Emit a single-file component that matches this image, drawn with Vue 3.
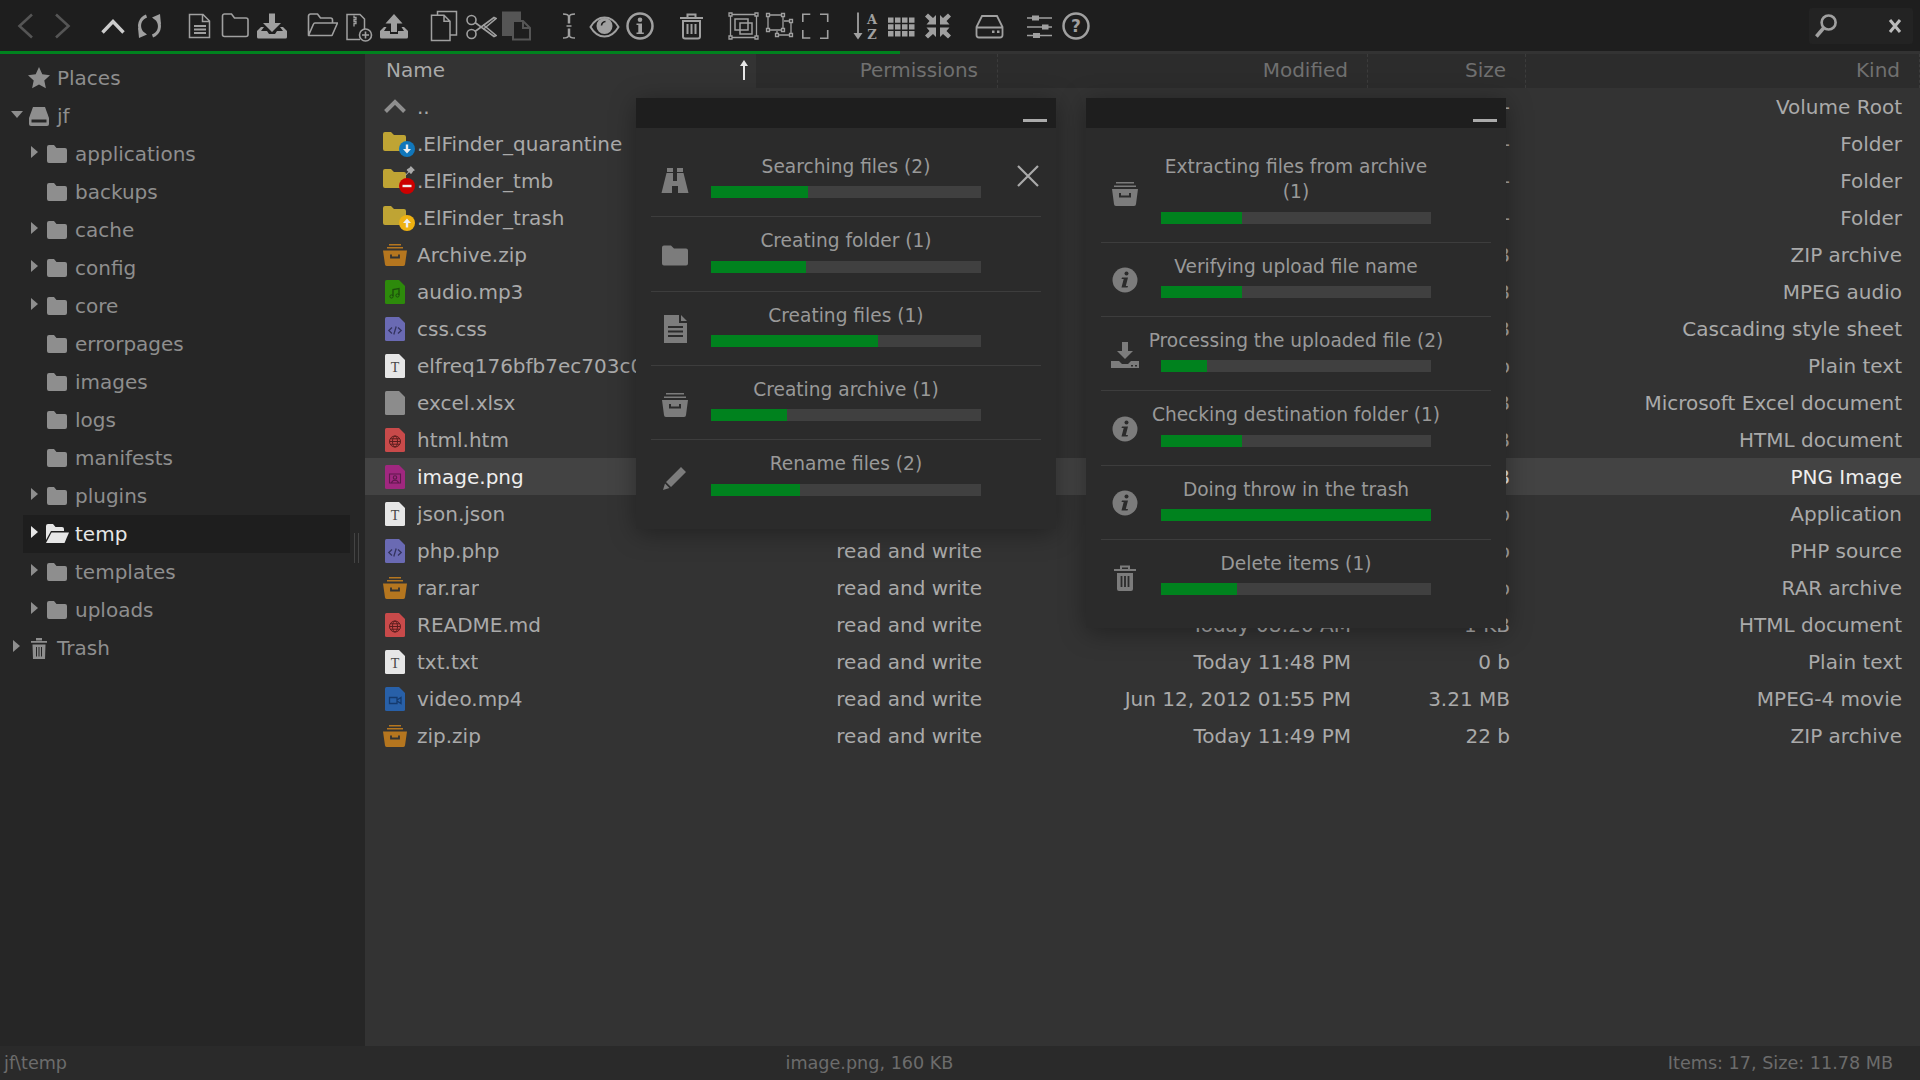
<template>
  <div class="finder">
    <svg class="defs" width="0" height="0" aria-hidden="true">
      <!-- toolbar, 32 box -->
      <symbol id="t-back" viewBox="0 0 32 32"><path d="M22 4.500 9.500 16 22 27.500" fill="none" stroke="#555" stroke-width="2.600"/></symbol>
      <symbol id="t-forward" viewBox="0 0 32 32"><path d="M10 4.500 22.500 16 10 27.500" fill="none" stroke="#555" stroke-width="2.600"/></symbol>
      <symbol id="t-up" viewBox="0 0 32 32"><path d="M5.500 22.500 16 11.500l10.500 11" fill="none" stroke="#ccc" stroke-width="3.400"/></symbol>
      <symbol id="t-reload" viewBox="0 0 32 32"><g fill="none" stroke="#a0a0a0" stroke-width="3"><path d="M13.500 6C7 8.500 4.500 15.500 8.500 22"/><path d="M19.500 26C26 23.500 28.500 16.500 24.500 10"/></g><path d="M5 17.500l9 7-8 3.500zM28 14.500l-9-7 8-3.500z" fill="#a0a0a0"/></symbol>
      <symbol id="t-file" viewBox="0 0 32 32"><path d="M6.500 4.500h13.500l6.500 6.500v16.500h-20zM19.500 4.500v7h7" fill="none" stroke="#a0a0a0" stroke-width="1.500"/><path d="M11 16h12M11 19.500h12M11 23h12" stroke="#a0a0a0" stroke-width="1.800"/></symbol>
      <symbol id="t-folder" viewBox="0 0 32 32"><path d="M3.500 6a2 2 0 0 1 2-2h7l3 4h11.500a2 2 0 0 1 2 2v14.500a2 2 0 0 1-2 2H5.500a2 2 0 0 1-2-2z" fill="none" stroke="#a0a0a0" stroke-width="1.600"/></symbol>
      <symbol id="t-download" viewBox="0 0 32 32"><path d="M14 3.500h6V13h6l-9 9-9-9h6z" fill="#a0a0a0"/><path d="M2 27v-6l4-4h3l-3 4h6l2 3h6l2-3h6l-3-4h3l4 4v6a1.500 1.500 0 0 1-1.500 1.500h-27A1.500 1.500 0 0 1 2 27z" fill="#a0a0a0"/></symbol>
      <symbol id="t-open" viewBox="0 0 32 32"><path d="M2.500 25V6a2 2 0 0 1 2-2h7l3 4h10a2 2 0 0 1 2 2v3M2.500 25.500l5-11.500a1.500 1.500 0 0 1 1.500-1h22.500l-5.500 12.500z" fill="none" stroke="#a0a0a0" stroke-width="1.600" stroke-linejoin="round"/></symbol>
      <symbol id="t-zip" viewBox="0 0 32 32"><path d="M18 29.500H5V4.500h13l4.500 4.500v10" fill="none" stroke="#a0a0a0" stroke-width="1.500"/><path d="M12 5.500v2h2v2h-2v2h2v2h-2v3" fill="none" stroke="#a0a0a0" stroke-width="1.300"/><circle cx="23.500" cy="25" r="6" fill="#1e1e1e" stroke="#a0a0a0" stroke-width="1.600"/><path d="M23.500 21.500v7M20 25h7" stroke="#a0a0a0" stroke-width="1.600"/></symbol>
      <symbol id="t-upload" viewBox="0 0 32 32"><path d="M16 4l8.500 9.500H19V22h-6v-8.500H7.500z" fill="#a0a0a0"/><path d="M2 27v-6l4-4h2.500L6 21h6v3h8v-3h6l-2.500-4H26l4 4v6a1.500 1.500 0 0 1-1.500 1.500h-25A1.500 1.500 0 0 1 2 27z" fill="#a0a0a0"/></symbol>
      <symbol id="t-copy" viewBox="0 0 32 32"><path d="M8.500 5V1.500h19V25H21M2.500 5.200H15l6 6v19.300H2.500zM15 5.200v6h6" fill="none" stroke="#a0a0a0" stroke-width="1.500"/></symbol>
      <symbol id="t-cut" viewBox="0 0 32 32"><g fill="none" stroke="#a0a0a0" stroke-width="1.600"><circle cx="6.500" cy="10" r="4.500"/><circle cx="6.500" cy="24" r="4.500"/><path d="M10 21.500 29 7.500l2 1L18 19.500M10 12.500l19 14 2-1L18 14.500"/></g></symbol>
      <symbol id="t-paste" viewBox="0 0 32 32"><path d="M1 1.500h19V10h-9v16H1z" fill="#555"/><path d="M12 11h10l7 7v11.500H12zM22 11v7h7" fill="none" stroke="#555" stroke-width="2"/></symbol>
      <symbol id="t-rename" viewBox="0 0 32 32"><path d="M11 4c3.500 0 5.500 .500 5.500 2.500v7M23 4c-3.500 0-5.500 .500-5.500 2.500v7M11 28c3.500 0 5.500-.500 5.500-2.500v-7M23 28c-3.500 0-5.500-.500-5.500-2.500v-7M14.500 16h5" fill="none" stroke="#a0a0a0" stroke-width="1.500"/></symbol>
      <symbol id="t-eye" viewBox="0 0 32 32"><path d="M2.500 17C6 11 11 7.500 16.500 7.500S27 11 30.500 17C27 23 22 26.500 16.500 26.500S6 23 2.500 17z" fill="none" stroke="#a0a0a0" stroke-width="2"/><circle cx="16.500" cy="16" r="8" fill="#a0a0a0"/><path d="M13.500 15.500a4.500 4.500 0 0 1 4-4" stroke="#1e1e1e" stroke-width="1.600" fill="none"/></symbol>
      <symbol id="t-info" viewBox="0 0 32 32"><circle cx="16" cy="16" r="12.500" fill="none" stroke="#a0a0a0" stroke-width="2.500"/><circle cx="16" cy="9.800" r="2.300" fill="#a0a0a0"/><path d="M12.500 13.500H18v9h1.800v1.500h-7.300v-1.500h1.800v-7.500h-1.800z" fill="#a0a0a0"/></symbol>
      <symbol id="t-trash" viewBox="0 0 32 32"><path d="M5 8h23M12.500 8V4.500h8V8" fill="none" stroke="#a0a0a0" stroke-width="2"/><path d="M8 11h17v15.500a2 2 0 0 1-2 2H10a2 2 0 0 1-2-2z" fill="none" stroke="#a0a0a0" stroke-width="2"/><path d="M12.500 14v10M16.500 14v10M20.500 14v10" stroke="#a0a0a0" stroke-width="2"/></symbol>
      <symbol id="t-selall" viewBox="0 0 32 32"><path d="M3.500 4.500h26v23h-26z" fill="none" stroke="#a0a0a0" stroke-width="1.300"/><path d="M8 9h13v11H8zM13 13h12v11H13z" fill="none" stroke="#a0a0a0" stroke-width="1.500"/><path d="M2 3h3v3H2zM28 3h3v3h-3zM2 26h3v3H2zM28 26h3v3h-3z" fill="#1e1e1e" stroke="#a0a0a0" stroke-width="1.300"/></symbol>
      <symbol id="t-selinv" viewBox="0 0 32 32"><path d="M5 5h15v15H5zM21 11h7v14H14v-4" fill="none" stroke="#a0a0a0" stroke-width="1.300"/><path d="M3.500 3.500h3v3h-3zM18.500 3.500h3v3h-3zM3.500 18.500h3v3h-3zM18.500 18.500h3v3h-3zM26.500 9.500h3v3h-3zM26.500 23.500h3v3h-3zM12.500 23.500h3v3h-3z" fill="#1e1e1e" stroke="#a0a0a0" stroke-width="1.300"/></symbol>
      <symbol id="t-selnone" viewBox="0 0 32 32"><path d="M3.800 12V4.300h7.500M21 4.300h7.700V12M3.800 20v8h7.500M21 28.300h7.700V20" fill="none" stroke="#a0a0a0" stroke-width="1.600"/></symbol>
      <symbol id="t-sort" viewBox="0 0 32 32"><path d="M8 2.500v22" stroke="#a0a0a0" stroke-width="1.800"/><path d="M3.500 23h9L8 29.500z" fill="#a0a0a0"/></symbol>
      <symbol id="t-grid" viewBox="0 0 32 32"><path d="M2 7.500h5.500v5.300H2zM9 7.500h5.500v5.300H9zM16 7.500h5.500v5.300H16zM23 7.500h5.500v5.300H23zM2 14.300h5.500v5.300H2zM9 14.300h5.500v5.300H9zM16 14.300h5.500v5.300H16zM23 14.300h5.500v5.300H23zM2 21.100h5.500v5.300H2zM9 21.100h5.500v5.300H9zM16 21.100h5.500v5.300H16zM23 21.100h5.500v5.300H23z" fill="#a0a0a0"/></symbol>
      <symbol id="t-compress" viewBox="0 0 32 32"><path d="M14 14.500V5l-3 3-5-4.500-3 3L7.500 11l-3 3.500zM18 14.500V5l3 3 5-4.500 3 3-4.500 4.500 3 3.500zM14 17.500V27l-3-3-5 4.500-3-3 4.500-4.500-3-3.500zM18 17.500V27l3-3 5 4.500 3-3-4.500-4.500 3-3.500z" fill="#a0a0a0"/></symbol>
      <symbol id="t-drive" viewBox="0 0 32 32"><path d="M9 6h15l5.500 11v8a2.500 2.500 0 0 1-2.500 2.500H6A2.500 2.500 0 0 1 3.500 25v-8zM3.500 17.500h26" fill="none" stroke="#a0a0a0" stroke-width="1.800"/><path d="M19 20.500h2.500V23H19zM24 20.500h2.500V23H24z" fill="#a0a0a0"/></symbol>
      <symbol id="t-prefs" viewBox="0 0 32 32"><path d="M3 8h25M3 17h25M3 25.500h25" stroke="#a0a0a0" stroke-width="1.500"/><path d="M8 5.500h7v5H8zM18 14.500h6.500v5H18zM9 23h7v5H9z" fill="#a0a0a0"/></symbol>
      <symbol id="t-help" viewBox="0 0 32 32"><circle cx="16" cy="16" r="12.500" fill="none" stroke="#a0a0a0" stroke-width="2.500"/></symbol>
      <symbol id="t-search" viewBox="0 0 32 32"><circle cx="19" cy="12" r="8" fill="none" stroke="#a0a0a0" stroke-width="3"/><path d="M13.500 18 5 28" stroke="#a0a0a0" stroke-width="4"/></symbol>

      <!-- dialog and tree, solid -->
      <symbol id="d-binoculars" viewBox="0 0 28 28"><path d="M6 1h6v4H6zM16 1h6v4h-6z" fill="#7c7c7c"/><path d="M5.500 6H12v8h4V6h6.500l5 20H17v-7h-6v7H.500z" fill="#7c7c7c"/></symbol>
      <symbol id="d-folder" viewBox="0 0 28 28"><path d="M1 6.500A2 2 0 0 1 3 4.500h7l3 3h12a2 2 0 0 1 2 2v13a2 2 0 0 1-2 2H3a2 2 0 0 1-2-2z" fill="#7c7c7c"/></symbol>
      <symbol id="d-doc" viewBox="0 0 28 28"><path d="M3 0h15v8h8v20H3zM20 0l6 6h-6z" fill="#7c7c7c"/><path d="M7 12h15M7 16.500h15M7 21h15" stroke="#2b2b2b" stroke-width="2"/></symbol>
      <symbol id="d-archive" viewBox="0 0 28 28"><path d="M5 3h18v1.500H5zM3 6.500h22V8H3z" fill="#7c7c7c"/><path d="M1 10h26l-2 15a2 2 0 0 1-2 2H5a2 2 0 0 1-2-2z" fill="#7c7c7c"/><path d="M9 14v3.500h10V14" fill="none" stroke="#2b2b2b" stroke-width="2"/></symbol>
      <symbol id="d-pencil" viewBox="0 0 28 28"><path d="M20 3l5 5L10 23l-5-5zM4 19.500l4.500 4.500-6.500 2z" fill="#7c7c7c"/></symbol>
      <symbol id="d-info" viewBox="0 0 28 28"><circle cx="14" cy="14" r="12.500" fill="#7c7c7c"/><circle cx="15.500" cy="7.500" r="2" fill="#2b2b2b"/><path d="M11 11.500h6l-2.200 8.500H17l-.500 1.500h-6l2.200-8.500H10.500z" fill="#2b2b2b"/></symbol>
      <symbol id="d-upload" viewBox="0 0 28 28"><path d="M11 1h6v9h5l-8 8-8-8h5z" fill="#7c7c7c"/><path d="M0 20h8l3 3h6l3-3h8v7H0z" fill="#7c7c7c"/><path d="M20 24h2v1.500h-2zM24 24h2v1.500h-2z" fill="#2b2b2b"/></symbol>
      <symbol id="d-trash" viewBox="0 0 28 28"><path d="M3 6h22M10 6V2.500h8V6" fill="none" stroke="#7c7c7c" stroke-width="2"/><path d="M6 9h16v16a2 2 0 0 1-2 2H8a2 2 0 0 1-2-2z" fill="#7c7c7c"/><path d="M10.500 12v11M14 12v11M17.500 12v11" stroke="#2b2b2b" stroke-width="1.800"/></symbol>

      <symbol id="s-star" viewBox="0 0 24 24"><path d="M12 1l3.300 7.300 7.700.900-5.700 5.300 1.600 7.800L12 18.400l-6.900 3.900 1.600-7.800L1 9.200l7.700-.900z" fill="#8e8e8e"/></symbol>
      <symbol id="s-drive" viewBox="0 0 24 24"><path d="M6 3h12l4 11v6a2 2 0 0 1-2 2H4a2 2 0 0 1-2-2v-6z" fill="#8e8e8e"/><path d="M4.500 15.500h15v3h-15z" fill="#262626"/></symbol>
      <symbol id="s-folder" viewBox="0 0 24 24"><path d="M2 5a2 2 0 0 1 2-2h5l2.500 3H20a2 2 0 0 1 2 2v11a2 2 0 0 1-2 2H4a2 2 0 0 1-2-2z" fill="#8e8e8e"/></symbol>
      <symbol id="s-open" viewBox="0 0 24 24"><path d="M1 18V4a2 2 0 0 1 2-2h5l2.500 3H17a2 2 0 0 1 2 2v2H6z" fill="#e6e6e6"/><path d="M6.500 10.500H24L19.500 21H1z" fill="#e6e6e6"/></symbol>
      <symbol id="s-trash" viewBox="0 0 24 24"><path d="M4 5h16v1.800H4zM9 2h6v2.500H9z" fill="#8e8e8e"/><path d="M5.500 8.500h13L18 23H6z" fill="#8e8e8e"/><path d="M9.500 11v9.500M12 11v9.500M14.500 11v9.500" stroke="#262626" stroke-width="1"/></symbol>

      <!-- file list -->
      <path id="f-base" d="M3.500 0H16l6 6v16.500a1.500 1.500 0 0 1-1.500 1.500h-17A1.500 1.500 0 0 1 2 22.500v-21A1.500 1.500 0 0 1 3.500 0z"/>
      <symbol id="f-up" viewBox="0 0 24 24"><path d="M2.500 16.500 12 7l9.500 9.500" fill="none" stroke="#8e8e8e" stroke-width="4"/></symbol>
      <symbol id="f-folder" viewBox="0 0 24 24"><path d="M0 2a2 2 0 0 1 2-2h6l3 3h10a2 2 0 0 1 2 2v14H2a2 2 0 0 1-2-2z" fill="#bfa434"/></symbol>
      <symbol id="f-archive" viewBox="0 0 24 24"><path d="M6 1h12v1.500H6zM4 4h16v1.500H4z" fill="#b5761f"/><path d="M0 7.500h24l-2 14a2 2 0 0 1-2 1.500H4a2 2 0 0 1-2-1.500z" fill="#b5761f"/><path d="M8 11.500v3h8v-3" fill="none" stroke="#333" stroke-width="1.800"/></symbol>
      <symbol id="f-audio" viewBox="0 0 24 24"><use href="#f-base" fill="#2d8a0b"/><path d="M10 16V9.500l6-1V15" fill="none" stroke="#1c4d0c" stroke-width="1.300"/><circle cx="8.500" cy="16.500" r="1.600" fill="none" stroke="#1c4d0c"/><circle cx="14.500" cy="15.500" r="1.600" fill="none" stroke="#1c4d0c"/></symbol>
      <symbol id="f-code" viewBox="0 0 24 24"><use href="#f-base" fill="#6a6ab3"/><path d="M9 10.500 5.800 13.500 9 16.500M15 10.500l3.200 3L15 16.500M13.200 9.500l-2.400 8" fill="none" stroke="#34345f" stroke-width="1.300"/></symbol>
      <symbol id="f-text" viewBox="0 0 24 24"><use href="#f-base" fill="#e6e6e6"/></symbol>
      <symbol id="f-blank" viewBox="0 0 24 24"><use href="#f-base" fill="#8c8c8c"/></symbol>
      <symbol id="f-html" viewBox="0 0 24 24"><use href="#f-base" fill="#c84a4a"/><g fill="none" stroke="#5a1d1d" stroke-width="1"><circle cx="12" cy="13.500" r="5.500"/><ellipse cx="12" cy="13.500" rx="2.500" ry="5.500"/><path d="M6.500 13.500h11M7.300 10.800h9.400M7.300 16.200h9.400"/></g></symbol>
      <symbol id="f-image" viewBox="0 0 24 24"><use href="#f-base" fill="#a0277f"/><g fill="none" stroke="#5e184c" stroke-width="1.100"><path d="M6.500 9h11v9h-11z"/><circle cx="12" cy="12.500" r="1.700"/><path d="M8.500 18c.500-2 2-2.700 3.500-2.700s3 .700 3.500 2.700"/></g></symbol>
      <symbol id="f-video" viewBox="0 0 24 24"><use href="#f-base" fill="#2860a8"/><path d="M6.500 10.500h7.500v6H6.500zM14 13l4-2.500v6L14 14" fill="none" stroke="#143a6e" stroke-width="1.300"/></symbol>
    </svg>

    <header class="toolbar">
      <div v-for="(group, i) in toolbar" :key="i" class="tool-group">
        <button v-for="name in group" :key="name" class="tool" type="button">
          <svg class="tool-icon" viewBox="0 0 32 32">
            <use :href="'#t-' + name" width="32" height="32" />
            <template v-if="name === 'sort'">
              <text x="22" y="13.500" class="sort-letter">A</text>
              <text x="22" y="28.500" class="sort-letter">Z</text>
            </template>
            <text v-if="name === 'help'" x="16" y="22" class="help-mark">?</text>
          </svg>
        </button>
      </div>
      <div class="search">
        <svg class="search-icon"><use href="#t-search" /></svg>
        <svg class="search-clear" viewBox="0 0 14 14"><path d="M2 1l10 12M12 1 2 13" stroke="#bbb" stroke-width="3" fill="none" /></svg>
      </div>
    </header>
    <div class="progress-line"></div>

    <div class="workspace">
      <aside class="tree">
        <div
          v-for="node in tree"
          :key="node.name"
          class="tree-row"
          :class="['level-' + node.level, { current: node.current }]"
        >
          <span class="arrow" :class="node.arrow"></span>
          <svg class="tree-icon"><use :href="'#s-' + node.icon" /></svg>
          <span class="tree-label">{{ node.name }}</span>
        </div>
        <div class="resizer"></div>
      </aside>

      <main class="files">
        <div class="file-head">
          <div class="head-cell name-head">
            Name
            <svg class="sort-arrow" viewBox="0 0 10 20"><path d="M5 0l4 6H6v14H4V6H1z" fill="#e6e6e6" /></svg>
          </div>
          <div class="head-cell">Permissions</div>
          <div class="head-cell">Modified</div>
          <div class="head-cell">Size</div>
          <div class="head-cell">Kind</div>
        </div>
        <div v-for="row in files" :key="row.name" class="file-row" :class="{ selected: row.selected }">
          <div class="file-name">
            <span class="file-icon-box">
              <svg class="file-icon" viewBox="0 0 24 24">
                <use :href="'#f-' + row.icon" width="24" height="24" />
                <text v-if="row.icon === 'text'" x="12" y="18" class="text-mark">T</text>
              </svg>
              <svg v-if="row.badge" class="badge" viewBox="0 0 16 16">
                <circle cx="8" cy="8" r="8" :fill="badgeColors[row.badge]" />
                <path v-if="row.badge === 'blue'" d="M6.800 3.500h2.400v4.500H12L8 12.500 4 8h2.800z" fill="#eee" />
                <path v-if="row.badge === 'red'" d="M3.500 6.800h9v2.400h-9z" fill="#eee" />
                <path v-if="row.badge === 'yellow'" d="M6.800 12.500h2.400V8H12L8 3.500 4 8h2.800z" fill="#eee" />
              </svg>
              <svg v-if="row.pin" class="pin" viewBox="0 0 12 12"><path d="M7 0l5 5-2 1-2 3-1 .500L5 7.500 1 11.500 0 11l4-4-2-2 .500-1 3-2z" fill="#aaa" /></svg>
            </span>
            <span class="file-label">{{ row.name }}</span>
          </div>
          <div class="cell">{{ row.perms }}</div>
          <div class="cell">{{ row.modified }}</div>
          <div class="cell">{{ row.size }}</div>
          <div class="cell">{{ row.kind }}</div>
        </div>
      </main>
    </div>

    <footer class="status">
      <span class="status-left">jf\temp</span>
      <span class="status-mid">image.png, 160 KB</span>
      <span class="status-right">Items: 17, Size: 11.78 MB</span>
    </footer>

    <section v-for="dlg in dialogs" :key="dlg.id" class="dialog" :class="dlg.id">
      <div class="dialog-head"><span class="minimize"></span></div>
      <div class="dialog-body">
        <div v-for="job in dlg.jobs" :key="job.text" class="job">
          <svg class="job-icon"><use :href="'#d-' + job.icon" /></svg>
          <div class="job-main">
            <div class="job-text" :class="{ narrow: job.narrow }">{{ job.text }}</div>
            <div class="bar"><div class="bar-fill" :style="{ width: job.pct + '%' }"></div></div>
          </div>
        </div>
        <svg v-if="dlg.id === 'dlg-a'" class="job-cancel" viewBox="0 0 24 24"><path d="M2 2l20 20M22 2 2 22" stroke="#aaa" stroke-width="2.200" fill="none" /></svg>
      </div>
    </section>
  </div>
</template>

<script setup>
const toolbar = [
  ['back', 'forward'],
  ['up', 'reload'],
  ['file', 'folder', 'download'],
  ['open', 'zip', 'upload'],
  ['copy', 'cut', 'paste'],
  ['rename', 'eye', 'info'],
  ['trash'],
  ['selall', 'selinv', 'selnone'],
  ['sort', 'grid', 'compress'],
  ['drive'],
  ['prefs', 'help'],
]

const badgeColors = { blue: '#1177bb', red: '#cc0000', yellow: '#eeb111' }

const tree = [
  { name: 'Places', level: 0, arrow: '', icon: 'star' },
  { name: 'jf', level: 0, arrow: 'open', icon: 'drive' },
  { name: 'applications', level: 1, arrow: 'closed', icon: 'folder' },
  { name: 'backups', level: 1, arrow: '', icon: 'folder' },
  { name: 'cache', level: 1, arrow: 'closed', icon: 'folder' },
  { name: 'config', level: 1, arrow: 'closed', icon: 'folder' },
  { name: 'core', level: 1, arrow: 'closed', icon: 'folder' },
  { name: 'errorpages', level: 1, arrow: '', icon: 'folder' },
  { name: 'images', level: 1, arrow: '', icon: 'folder' },
  { name: 'logs', level: 1, arrow: '', icon: 'folder' },
  { name: 'manifests', level: 1, arrow: '', icon: 'folder' },
  { name: 'plugins', level: 1, arrow: 'closed', icon: 'folder' },
  { name: 'temp', level: 1, arrow: 'closed', icon: 'open', current: true },
  { name: 'templates', level: 1, arrow: 'closed', icon: 'folder' },
  { name: 'uploads', level: 1, arrow: 'closed', icon: 'folder' },
  { name: 'Trash', level: 0, arrow: 'closed', icon: 'trash' },
]

const rw = 'read and write'
const files = [
  { name: '..', icon: 'up', perms: rw, modified: 'Today 11:49 PM', size: '-', kind: 'Volume Root' },
  { name: '.ElFinder_quarantine', icon: 'folder', badge: 'blue', perms: rw, modified: 'Today 11:49 PM', size: '-', kind: 'Folder' },
  { name: '.ElFinder_tmb', icon: 'folder', badge: 'red', pin: true, perms: rw, modified: 'Today 11:49 PM', size: '-', kind: 'Folder' },
  { name: '.ElFinder_trash', icon: 'folder', badge: 'yellow', perms: rw, modified: 'Today 11:49 PM', size: '-', kind: 'Folder' },
  { name: 'Archive.zip', icon: 'archive', perms: rw, modified: 'Today 11:49 PM', size: '2 KB', kind: 'ZIP archive' },
  { name: 'audio.mp3', icon: 'audio', perms: rw, modified: 'Today 11:49 PM', size: '2 MB', kind: 'MPEG audio' },
  { name: 'css.css', icon: 'code', perms: rw, modified: 'Today 11:49 PM', size: '1 KB', kind: 'Cascading style sheet' },
  { name: 'elfreq176bfb7ec703c0e5a2', icon: 'text', perms: rw, modified: 'Today 11:49 PM', size: '0 b', kind: 'Plain text' },
  { name: 'excel.xlsx', icon: 'blank', perms: rw, modified: 'Today 11:49 PM', size: '4 KB', kind: 'Microsoft Excel document' },
  { name: 'html.htm', icon: 'html', perms: rw, modified: 'Today 11:49 PM', size: '1 KB', kind: 'HTML document' },
  { name: 'image.png', icon: 'image', perms: rw, modified: 'Today 11:49 PM', size: '160 KB', kind: 'PNG Image', selected: true },
  { name: 'json.json', icon: 'text', perms: rw, modified: 'Today 11:49 PM', size: '0 b', kind: 'Application' },
  { name: 'php.php', icon: 'code', perms: rw, modified: 'Today 11:49 PM', size: '0 b', kind: 'PHP source' },
  { name: 'rar.rar', icon: 'archive', perms: rw, modified: 'Today 11:49 PM', size: '0 b', kind: 'RAR archive' },
  { name: 'README.md', icon: 'html', perms: rw, modified: 'Today 08:20 AM', size: '1 KB', kind: 'HTML document' },
  { name: 'txt.txt', icon: 'text', perms: rw, modified: 'Today 11:48 PM', size: '0 b', kind: 'Plain text' },
  { name: 'video.mp4', icon: 'video', perms: rw, modified: 'Jun 12, 2012 01:55 PM', size: '3.21 MB', kind: 'MPEG-4 movie' },
  { name: 'zip.zip', icon: 'archive', perms: rw, modified: 'Today 11:49 PM', size: '22 b', kind: 'ZIP archive' },
]

const dialogs = [
  {
    id: 'dlg-a',
    jobs: [
      { icon: 'binoculars', text: 'Searching files (2)', pct: 36 },
      { icon: 'folder', text: 'Creating folder (1)', pct: 35 },
      { icon: 'doc', text: 'Creating files (1)', pct: 62 },
      { icon: 'archive', text: 'Creating archive (1)', pct: 28 },
      { icon: 'pencil', text: 'Rename files (2)', pct: 33 },
    ],
  },
  {
    id: 'dlg-b',
    jobs: [
      { icon: 'archive', text: 'Extracting files from archive (1)', pct: 30, narrow: true },
      { icon: 'info', text: 'Verifying upload file name', pct: 30 },
      { icon: 'upload', text: 'Processing the uploaded file (2)', pct: 17 },
      { icon: 'info', text: 'Checking destination folder (1)', pct: 30 },
      { icon: 'info', text: 'Doing throw in the trash', pct: 100 },
      { icon: 'trash', text: 'Delete items (1)', pct: 28 },
    ],
  },
]
</script>

<style>
html,
body {
  margin: 0;
  background: #333;
}
</style>

<style scoped>
.finder {
  position: relative;
  display: flex;
  flex-direction: column;
  width: 1920px;
  height: 1080px;
  overflow: hidden;
  background: #333;
  font-family: "DejaVu Sans", sans-serif;
  font-size: 20px;
  color: #aaa;
}

.defs {
  position: absolute;
}

.sort-letter {
  font: bold 13px "DejaVu Serif", serif;
  fill: #a0a0a0;
  text-anchor: middle;
}

.help-mark {
  font: bold 17px "DejaVu Sans", sans-serif;
  fill: #a0a0a0;
  text-anchor: middle;
}

.text-mark {
  font: 14px "Liberation Serif", serif;
  fill: #444;
  text-anchor: middle;
}

.toolbar {
  display: flex;
  align-items: center;
  gap: 15px;
  height: 51px;
  padding-left: 8px;
  background: #1e1e1e;
}

.tool-group {
  display: flex;
}

.tool-group:nth-child(3) {
  margin-left: -1px;
}

.tool-group:nth-child(8) {
  margin-left: 1px;
}

.tool {
  display: flex;
  align-items: center;
  justify-content: center;
  width: 36px;
  height: 36px;
  padding: 0;
  border: 0;
  background: none;
}

.tool-icon {
  width: 32px;
  height: 32px;
}

.search {
  display: flex;
  align-items: center;
  justify-content: space-between;
  width: 104px;
  height: 36px;
  box-sizing: border-box;
  margin-left: auto;
  margin-right: 7px;
  padding: 0 11px 0 3px;
  border-radius: 3px;
  background: #232323;
}

.search-icon {
  width: 28px;
  height: 28px;
}

.search-clear {
  width: 14px;
  height: 14px;
}

.progress-line {
  width: 900px;
  height: 3px;
  background: #00821e;
}

.workspace {
  display: flex;
  flex: 1;
  min-height: 0;
}

.tree {
  position: relative;
  width: 365px;
  flex: none;
  box-sizing: border-box;
  padding-top: 5px;
  background: #262626;
  color: #8e8e8e;
}

.tree-row {
  display: flex;
  align-items: center;
  height: 38px;
  margin-right: 15px;
}

.level-0 {
  padding-left: 10px;
}

.level-1 {
  padding-left: 28px;
}

.arrow {
  display: block;
  width: 18px;
  height: 12px;
  flex: none;
  margin-top: -4px;
  box-sizing: border-box;
  padding-left: 3px;
}

.arrow.closed::before {
  content: "";
  display: block;
  width: 0;
  height: 0;
  border-top: 6px solid transparent;
  border-bottom: 6px solid transparent;
  border-left: 7px solid #8e8e8e;
}

.arrow.open::before {
  content: "";
  display: block;
  width: 0;
  height: 0;
  margin: 3px 0 0 -2px;
  border-left: 6px solid transparent;
  border-right: 6px solid transparent;
  border-top: 7px solid #8e8e8e;
}

.tree-icon {
  width: 24px;
  height: 24px;
  flex: none;
  margin-left: -1px;
  margin-right: 6px;
}

.tree-row.current {
  margin-left: 23px;
  padding-left: 5px;
  background: #1e1e1e;
  color: #e6e6e6;
}

.tree-row.current .arrow.closed::before {
  border-left-color: #e6e6e6;
}

.resizer {
  position: absolute;
  top: 479px;
  left: 354px;
  width: 3px;
  height: 30px;
  border-left: 1px solid #444;
  border-right: 1px solid #444;
}

.files {
  flex: 1;
  min-width: 0;
}

.file-head,
.file-row {
  display: grid;
  grid-template-columns: 391px 242px 370px 158px 1fr;
}

.file-head {
  height: 34px;
  background: #2c2c2c;
  color: #707070;
  line-height: 32px;
}

.head-cell {
  padding-right: 19px;
  border-right: 1px dashed #3c3c3c;
  text-align: right;
}

.name-head {
  position: relative;
  padding-left: 21px;
  background: #333;
  border-right: 0;
  color: #aaa;
  text-align: left;
}

.sort-arrow {
  position: absolute;
  top: 6px;
  right: 7px;
  width: 10px;
  height: 20px;
}

.file-row {
  height: 37px;
  line-height: 38px;
}

.file-row.selected {
  background: #434343;
  color: #eee;
}

.file-name {
  display: flex;
  align-items: center;
  min-width: 0;
  padding-left: 18px;
}

.file-icon-box {
  position: relative;
  display: block;
  width: 34px;
  height: 24px;
  flex: none;
}

.file-icon {
  display: block;
  width: 24px;
  height: 24px;
}

.file-label {
  overflow: hidden;
  white-space: nowrap;
}

.badge {
  position: absolute;
  top: 9px;
  left: 16px;
  width: 16px;
  height: 16px;
}

.pin {
  position: absolute;
  top: -3px;
  left: 22px;
  width: 10px;
  height: 10px;
}

.cell {
  padding-right: 16px;
  text-align: right;
  white-space: nowrap;
}

.cell:nth-child(3) {
  padding-right: 17px;
}

.cell:last-child {
  padding-right: 18px;
}

.status {
  display: grid;
  grid-template-columns: 1fr auto 1fr;
  align-items: center;
  height: 34px;
  padding: 0 27px 0 4px;
  background: #2a2a2a;
  color: #6c6c6c;
  font-size: 17.6px;
}

.status-mid {
  margin-right: 158px;
}

.status-right {
  text-align: right;
}

.dialog {
  position: absolute;
  top: 98px;
  width: 420px;
  background: #2b2b2b;
  box-shadow: 0 4px 24px rgba(0, 0, 0, 0.35);
  color: #999;
  font-size: 18.6px;
}

.dlg-a {
  left: 636px;
}

.dlg-b {
  left: 1086px;
}

.dialog-head {
  position: relative;
  height: 30px;
  background: #1e1e1e;
}

.minimize {
  position: absolute;
  top: 21px;
  right: 9px;
  width: 24px;
  height: 3px;
  background: #aaa;
}

.dialog-body {
  position: relative;
  padding: 15px 15px 14px;
}

.job {
  display: grid;
  grid-template-columns: 45px 300px 45px;
  align-items: center;
  padding: 11px 0 18px;
  border-bottom: 1px solid #3d3d3d;
}

.job:last-of-type {
  border-bottom-color: transparent;
}

.job-icon {
  width: 28px;
  height: 28px;
  margin: 9px 0 0 10px;
}

.job-main {
  min-width: 0;
}

.job-text {
  line-height: 25.33px;
  text-align: center;
}

.job-text.narrow {
  max-width: 280px;
  margin: 0 auto;
}

.bar {
  width: 270px;
  height: 12px;
  margin: 7px auto 0;
  background: #404040;
}

.bar-fill {
  height: 100%;
  background: #00821e;
}

.job-cancel {
  position: absolute;
  top: 36px;
  right: 16px;
  width: 24px;
  height: 24px;
}
</style>
